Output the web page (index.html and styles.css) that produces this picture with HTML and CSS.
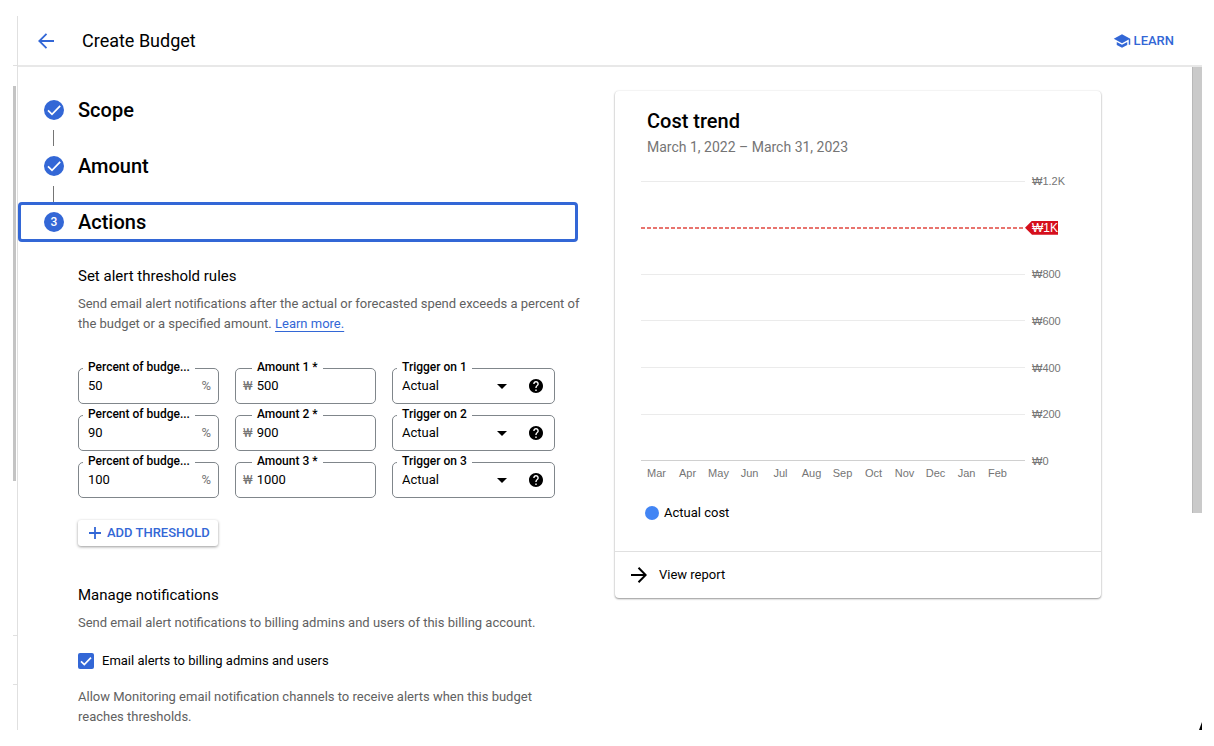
FILE: index.html
```html
<!DOCTYPE html>
<html lang="en">

<head>
    <meta charset="UTF-8" />
    <meta name="viewport" content="width=device-width, initial-scale=1" />
    <title>Create Budget</title>
    <link rel="stylesheet" href="styles.css">
</head>

<body>
    <div class="app">

        <!-- Collapsed side nav -->
        <div class="side">
            <div class="side-head"></div>
            <div class="side-scroll"><div class="side-thumb"></div></div>
            <div class="side-item"></div>
            <div class="side-foot"></div>
        </div>

        <div class="page">
            <header class="topbar">
                <button class="back" aria-label="Back">
                    <svg width="16" height="16" viewBox="0 0 16 16"><path d="M16 8H1.5M8.5 .8 1.3 8l7.2 7.2" fill="none" stroke="currentColor" stroke-width="1.8" /></svg>
                </button>
                <h1>Create Budget</h1>
                <a class="learn" href="#">
                    <svg width="18" height="18" viewBox="0 0 24 24"><path d="M5 13.18v4L12 21l7-3.82v-4L12 17l-7-3.82zM12 3L1 9l11 6 9-4.91V17h2V9L12 3z" fill="currentColor" /></svg>
                    LEARN
                </a>
            </header>

            <div class="body">
                <main class="content">
                    <section class="form">
                        <div class="steps">
                            <div class="step">
                                <span class="badge"><svg width="20" height="20" viewBox="0 0 20 20"><path d="M4 10.4l4 4 8.2-8.6" fill="none" stroke="currentColor" stroke-width="1.7" /></svg></span>
                                <h2>Scope</h2>
                            </div>
                            <div class="connector"></div>
                            <div class="step">
                                <span class="badge"><svg width="20" height="20" viewBox="0 0 20 20"><path d="M4 10.4l4 4 8.2-8.6" fill="none" stroke="currentColor" stroke-width="1.7" /></svg></span>
                                <h2>Amount</h2>
                            </div>
                            <div class="connector"></div>
                            <div class="step current">
                                <span class="badge">3</span>
                                <h2>Actions</h2>
                            </div>
                        </div>

                        <div class="step-body">
                            <h3>Set alert threshold rules</h3>
                            <p>Send email alert notifications after the actual or forecasted spend exceeds a percent of the budget or a specified amount. <a href="#">Learn more.</a></p>

                            <div class="rules">
                                <div class="rule">
                                    <div class="field">
                                        <label for="percent1">Percent of budge...</label>
                                        <input id="percent1" type="text" value="50" />
                                        <span class="unit">%</span>
                                    </div>
                                    <div class="field amount">
                                        <label for="amount1">Amount 1 *</label>
                                        <span class="unit">₩</span>
                                        <input id="amount1" type="text" value="500" />
                                    </div>
                                    <div class="field trigger">
                                        <label for="trigger1">Trigger on 1</label>
                                        <select id="trigger1"><option>Actual</option></select>
                                        <svg class="arrow" width="10" height="5" viewBox="0 0 10 5"><path d="M0 0h10L5 5z" /></svg>
                                        <button class="help" aria-label="Help"><svg width="14" height="14" viewBox="2 2 20 20"><path d="M12 2C6.48 2 2 6.48 2 12s4.48 10 10 10 10-4.48 10-10S17.52 2 12 2zm1 17h-2v-2h2v2zm2.07-7.75l-.9.92C13.45 12.9 13 13.5 13 15h-2v-.5c0-1.1.45-2.1 1.17-2.83l1.24-1.26c.37-.36.59-.86.59-1.41 0-1.1-.9-2-2-2s-2 .9-2 2H8c0-2.21 1.79-4 4-4s4 1.79 4 4c0 .88-.36 1.68-.93 2.25z" /></svg></button>
                                    </div>
                                </div>
                                <div class="rule">
                                    <div class="field">
                                        <label for="percent2">Percent of budge...</label>
                                        <input id="percent2" type="text" value="90" />
                                        <span class="unit">%</span>
                                    </div>
                                    <div class="field amount">
                                        <label for="amount2">Amount 2 *</label>
                                        <span class="unit">₩</span>
                                        <input id="amount2" type="text" value="900" />
                                    </div>
                                    <div class="field trigger">
                                        <label for="trigger2">Trigger on 2</label>
                                        <select id="trigger2"><option>Actual</option></select>
                                        <svg class="arrow" width="10" height="5" viewBox="0 0 10 5"><path d="M0 0h10L5 5z" /></svg>
                                        <button class="help" aria-label="Help"><svg width="14" height="14" viewBox="2 2 20 20"><path d="M12 2C6.48 2 2 6.48 2 12s4.48 10 10 10 10-4.48 10-10S17.52 2 12 2zm1 17h-2v-2h2v2zm2.07-7.75l-.9.92C13.45 12.9 13 13.5 13 15h-2v-.5c0-1.1.45-2.1 1.17-2.83l1.24-1.26c.37-.36.59-.86.59-1.41 0-1.1-.9-2-2-2s-2 .9-2 2H8c0-2.21 1.79-4 4-4s4 1.79 4 4c0 .88-.36 1.68-.93 2.25z" /></svg></button>
                                    </div>
                                </div>
                                <div class="rule">
                                    <div class="field">
                                        <label for="percent3">Percent of budge...</label>
                                        <input id="percent3" type="text" value="100" />
                                        <span class="unit">%</span>
                                    </div>
                                    <div class="field amount">
                                        <label for="amount3">Amount 3 *</label>
                                        <span class="unit">₩</span>
                                        <input id="amount3" type="text" value="1000" />
                                    </div>
                                    <div class="field trigger">
                                        <label for="trigger3">Trigger on 3</label>
                                        <select id="trigger3"><option>Actual</option></select>
                                        <svg class="arrow" width="10" height="5" viewBox="0 0 10 5"><path d="M0 0h10L5 5z" /></svg>
                                        <button class="help" aria-label="Help"><svg width="14" height="14" viewBox="2 2 20 20"><path d="M12 2C6.48 2 2 6.48 2 12s4.48 10 10 10 10-4.48 10-10S17.52 2 12 2zm1 17h-2v-2h2v2zm2.07-7.75l-.9.92C13.45 12.9 13 13.5 13 15h-2v-.5c0-1.1.45-2.1 1.17-2.83l1.24-1.26c.37-.36.59-.86.59-1.41 0-1.1-.9-2-2-2s-2 .9-2 2H8c0-2.21 1.79-4 4-4s4 1.79 4 4c0 .88-.36 1.68-.93 2.25z" /></svg></button>
                                    </div>
                                </div>
                            </div>

                            <button class="add">
                                <svg width="12" height="12" viewBox="0 0 12 12"><path d="M6 0v12M0 6h12" stroke="currentColor" stroke-width="1.8" /></svg>
                                ADD THRESHOLD
                            </button>

                            <h3 class="manage">Manage notifications</h3>
                            <p>Send email alert notifications to billing admins and users of this billing account.</p>
                            <div class="check-row">
                                <span class="check">
                                    <input id="email-alerts" type="checkbox" checked />
                                    <svg width="16" height="16" viewBox="0 0 16 16"><path d="M3 8.3l3.3 3.3L13 4.7" fill="none" stroke="#fff" stroke-width="1.7" /></svg>
                                </span>
                                <label for="email-alerts">Email alerts to billing admins and users</label>
                            </div>
                            <p class="hint">Allow Monitoring email notification channels to receive alerts when this budget reaches thresholds.</p>
                        </div>
                    </section>

                    <aside class="card">
                        <h2>Cost trend</h2>
                        <div class="period">March 1, 2022 – March 31, 2023</div>
                        <div class="chart">
                            <div class="grid-row"><i></i><span>₩1.2K</span></div>
                            <div class="grid-row budget"><i></i><span><b>₩1K</b></span></div>
                            <div class="grid-row"><i></i><span>₩800</span></div>
                            <div class="grid-row"><i></i><span>₩600</span></div>
                            <div class="grid-row"><i></i><span>₩400</span></div>
                            <div class="grid-row"><i></i><span>₩200</span></div>
                            <div class="grid-row base"><i></i><span>₩0</span></div>
                        </div>
                        <div class="months">
                            <span>Mar</span><span>Apr</span><span>May</span><span>Jun</span><span>Jul</span><span>Aug</span><span>Sep</span><span>Oct</span><span>Nov</span><span>Dec</span><span>Jan</span><span>Feb</span>
                        </div>
                        <div class="legend"><span class="dot"></span>Actual cost</div>
                        <a class="report" href="#">
                            <svg width="16" height="16" viewBox="0 0 16 16"><path d="M0 8h14.5M7.5 .8 14.7 8l-7.2 7.2" fill="none" stroke="currentColor" stroke-width="2" /></svg>
                            View report
                        </a>
                    </aside>
                </main>
                <div class="scroll"><div class="thumb"></div></div>
            </div>
            <div class="corner"></div>
        </div>
    </div>
</body>

</html>
```
FILE: styles.css
```css
* {
    margin: 0;
    padding: 0;
    box-sizing: border-box;
}

body {
    background: #fff;
    color: #000;
    font-family: Roboto, sans-serif;
    font-size: 13px;
    line-height: 20px;
}

button,
input,
select {
    font: inherit;
    color: inherit;
    border: none;
    background: none;
    outline: none;
}

svg {
    display: block;
    flex: none;
}

.app {
    display: flex;
    height: 100vh;
    padding: 16px 12px 16px 13px;
    overflow: hidden;
}

/* side nav */
.side {
    display: flex;
    flex-direction: column;
    width: 5px;
    border-right: 1px solid #e0e0e0;
}

.side-head {
    height: 50px;
    border-bottom: 1px solid #e0e0e0;
}

.side-scroll {
    flex: 1;
    padding-top: 20px;
    border-bottom: 1px solid #e0e0e0;
}

.side-thumb {
    width: 3px;
    height: 72%;
    background: #c4c4c4;
}

.side-item {
    height: 49px;
    border-bottom: 1px solid #e0e0e0;
}

.side-foot {
    height: 45px;
}

/* page */
.page {
    position: relative;
    display: flex;
    flex: 1;
    flex-direction: column;
    min-width: 0;
}

.topbar {
    display: flex;
    flex: none;
    align-items: center;
    height: 51px;
    padding: 1px 28px 0 20px;
    border-bottom: 2px solid #e8e8e8;
}

.topbar h1 {
    margin-left: 28px;
    font-size: 18px;
    font-weight: 400;
}

.back {
    color: #3367d6;
    cursor: pointer;
}

.learn {
    display: flex;
    align-items: center;
    gap: 3px;
    margin-left: auto;
    color: #3367d6;
    font-size: 13px;
    font-weight: 500;
    text-decoration: none;
}

.body {
    display: flex;
    flex: 1;
    min-height: 0;
}

.content {
    display: grid;
    flex: 1;
    grid-template-columns: minmax(0, 565px) minmax(0, 486px);
    gap: 32px;
    align-items: start;
    overflow: hidden;
}

.scroll {
    width: 10px;
}

.thumb {
    height: 446px;
    border-left: 1px solid #b8b8b8;
    background: #cacaca;
}

.corner {
    position: absolute;
    right: 0;
    bottom: 0;
    width: 3px;
    height: 8px;
    background: #000;
    clip-path: polygon(100% 0, 100% 100%, 0 100%);
}

/* steps */
.form {
    padding-top: 23px;
}

.steps {
    margin-right: 5px;
}

.step {
    display: flex;
    align-items: center;
    gap: 14px;
    height: 40px;
    padding-left: 26px;
}

.step h2,
.card h2 {
    font-size: 20px;
    font-weight: 500;
    line-height: 24px;
}

.step.current {
    padding-left: 23px;
    border: 3px solid #3367d6;
    border-radius: 4px;
}

.badge {
    width: 20px;
    height: 20px;
    border-radius: 50%;
    background: #3367d6;
    color: #fff;
    font-size: 12px;
    font-weight: 500;
    text-align: center;
}

.connector {
    width: 1px;
    height: 16px;
    margin-left: 35px;
    background: #757575;
}

.step-body {
    padding: 24px 0 0 60px;
}

h3 {
    margin-bottom: 8px;
    font-size: 15px;
    font-weight: 400;
}

p {
    color: #616161;
}

p a {
    color: #3367d6;
    text-decoration: underline;
    text-underline-offset: 3px;
    text-decoration-skip-ink: none;
}

.hint {
    max-width: 480px;
}

/* threshold rules */
.rules {
    display: flex;
    flex-direction: column;
    gap: 11px;
    margin-top: 34px;
}

.rule {
    display: grid;
    grid-template-columns: 141px 141px 163px;
    gap: 16px;
}

.field {
    position: relative;
    display: flex;
    align-items: center;
    height: 36px;
    padding: 0 7px 0 9px;
    border: 1px solid #80868b;
    border-radius: 5px;
}

.field label {
    position: absolute;
    top: -10px;
    left: 4px;
    padding: 0 5px;
    background: #fff;
    font-size: 12px;
    font-weight: 500;
    line-height: 16px;
    white-space: nowrap;
}

.field input,
.field select {
    flex: 1;
    width: 0;
    min-width: 0;
    height: 20px;
    appearance: none;
}

.unit {
    color: #757575;
}

.amount {
    gap: 4px;
    padding-left: 7px;
}

.amount label {
    left: 16px;
}

.trigger {
    padding-right: 11px;
}

.help {
    margin-left: 22px;
    cursor: pointer;
}

.add {
    display: flex;
    align-items: center;
    gap: 6px;
    height: 26px;
    margin-top: 22px;
    padding: 0 8px 0 11px;
    border-radius: 3px;
    box-shadow: 0 1px 3px rgba(0, 0, 0, 0.4);
    color: #3367d6;
    font-weight: 500;
    cursor: pointer;
}

.manage {
    margin-top: 39px;
}

.check-row {
    display: flex;
    align-items: center;
    gap: 8px;
    margin: 18px 0 16px;
}

.check {
    display: grid;
}

.check input,
.check svg {
    grid-area: 1 / 1;
}

.check input {
    width: 16px;
    height: 16px;
    border-radius: 2px;
    appearance: none;
    background: #3367d6;
}

.check input:not(:checked) {
    border: 2px solid #757575;
    background: #fff;
}

.check svg {
    pointer-events: none;
}

/* cost trend card */
.card {
    margin-top: 24px;
    padding-top: 18px;
    border-radius: 4px;
    box-shadow: 0 1px 2px rgba(0, 0, 0, 0.4), 0 0 2px rgba(0, 0, 0, 0.1);
}

.card h2,
.period {
    margin-left: 32px;
}

.period {
    margin-top: 4px;
    color: #757575;
    font-size: 14px;
}

.chart {
    display: flex;
    flex-direction: column;
    justify-content: space-between;
    height: 290px;
    margin: 19px 32px 0 26px;
}

.grid-row {
    display: flex;
    align-items: center;
    height: 10px;
}

.grid-row i {
    flex: 1;
    border-top: 1px solid #ebebeb;
}

.grid-row span {
    width: 44px;
    padding-left: 7px;
    color: #757575;
    font-family: "Liberation Sans", sans-serif;
    font-size: 11px;
    line-height: 14px;
}

.grid-row.base i {
    border-color: #d0d0d0;
}

.grid-row.budget i {
    height: 2px;
    border: none;
    background: repeating-linear-gradient(to right, #e8746e 0 4px, #fff 4px 6px);
}

.grid-row.budget span {
    padding-left: 0;
}

.grid-row b {
    display: inline-block;
    padding-left: 7px;
    background: #d50f1c;
    clip-path: polygon(7px 0, 100% 0, 100% 100%, 7px 100%, 0 50%);
    color: #fff;
    font-size: 12px;
    font-weight: 400;
    vertical-align: top;
}

.months {
    display: grid;
    grid-template-columns: repeat(12, 1fr);
    margin: 0 88px 0 26px;
    color: #757575;
    font-family: "Liberation Sans", sans-serif;
    font-size: 11px;
    line-height: 14px;
    text-align: center;
}

.legend {
    display: flex;
    align-items: center;
    gap: 5px;
    margin: 23px 0 28px 30px;
}

.dot {
    width: 14px;
    height: 14px;
    border-radius: 50%;
    background: #4285f4;
}

.report {
    display: flex;
    align-items: center;
    gap: 12px;
    height: 47px;
    padding-left: 16px;
    border-top: 1px solid #e0e0e0;
    color: #000;
    text-decoration: none;
}
```
